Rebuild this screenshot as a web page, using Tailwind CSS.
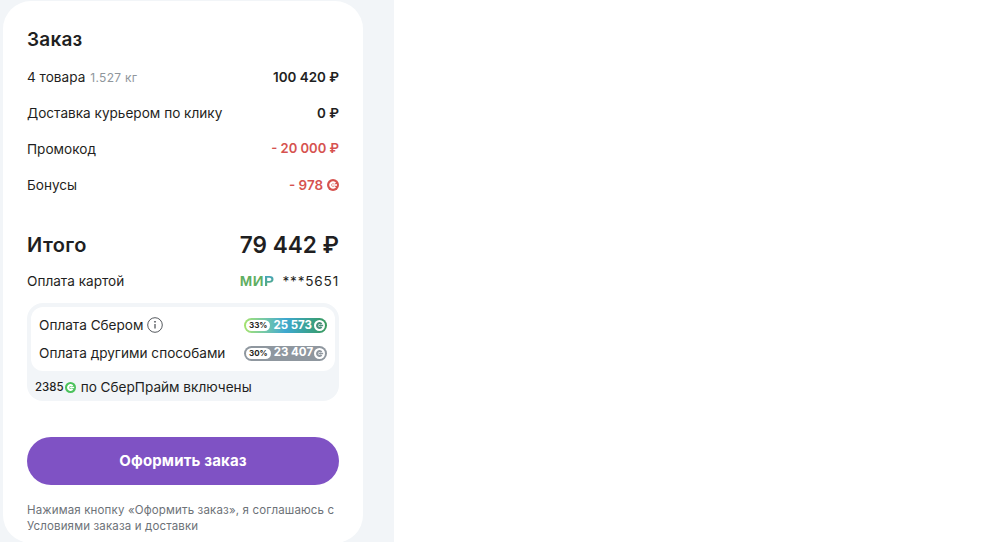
<!DOCTYPE html>
<html lang="ru">
<head>
  <meta charset="utf-8" />
  <title>Заказ</title>
  <script src="https://cdn.jsdelivr.net/npm/@tailwindcss/browser@4"></script>
</head>
<body class="bg-white font-['Inter','Noto_Sans',sans-serif] text-[#1f1f22] overflow-hidden">
  <div class="w-[394px] h-[542px] bg-[#f2f5f8] pl-[3px] pt-px overflow-hidden">
    <section class="w-[360px] h-[542px] bg-white rounded-[28px] px-6 pt-[27px]">
      <h2 class="text-[19px] leading-6 font-semibold tracking-[0.2px] mb-[7px]">Заказ</h2>

      <div class="flex justify-between items-center h-9 text-[13.6px]">
        <div class="flex items-baseline gap-[5px]"><span>4 товара</span><span class="text-[12px] tracking-[0.3px] text-[#8f969c]">1.527 кг</span></div>
        <span class="font-semibold text-[13.4px]">100 420 ₽</span>
      </div>
      <div class="flex justify-between items-center h-9 text-[13.6px]">
        <span>Доставка курьером по клику</span>
        <span class="font-semibold text-[13.4px]">0 ₽</span>
      </div>
      <div class="flex justify-between items-center h-9 text-[13.6px]">
        <span>Промокод</span>
        <span class="font-semibold text-[13px] text-[#d6524f]">- 20 000 ₽</span>
      </div>
      <div class="flex justify-between items-center h-9 text-[13.6px]">
        <span>Бонусы</span>
        <span class="flex items-center gap-[4px] font-semibold text-[13.4px] text-[#d6524f]">- 978
          <svg class="w-3 h-3" viewBox="0 0 12 12"><circle cx="6" cy="6" r="6" fill="#d6524f"/><path d="M8.2 4.4A2.7 2.7 0 1 0 8.2 7.6" fill="none" stroke="#fff" stroke-width="2.2"/><path d="M5 6H10" stroke="#fff" stroke-width="1.6"/></svg>
        </span>
      </div>

      <div class="flex justify-between items-center h-9 mt-[24px]">
        <span class="text-[20px] font-semibold tracking-[0.4px]">Итого</span>
        <span class="text-[22.6px] font-semibold">79 442 ₽</span>
      </div>
      <div class="flex justify-between items-center h-9 text-[13.6px]">
        <span>Оплата картой</span>
        <span class="flex items-center gap-[8px]">
          <span class="font-['Liberation_Sans'] font-bold text-[15px] leading-none tracking-[0.5px] text-[#5fae62]">МИ<span class="text-transparent bg-clip-text bg-gradient-to-b from-[#3f9fd0] to-[#5fae62]">Р</span></span>
          <span class="tracking-[0.8px]">***5651</span>
        </span>
      </div>

      <div class="mt-[4px] bg-[#f2f5f8] rounded-[16px] p-1 pb-0 h-[98px]">
        <div class="bg-white rounded-[12px] h-16 px-2">
          <div class="flex justify-between items-center h-[36px] text-[13.6px] pt-[1px]">
            <span class="flex items-center gap-1">Оплата Сбером
              <svg class="w-4 h-4" viewBox="0 0 16 16" fill="none" stroke="#55595e"><circle cx="8" cy="8" r="7.3"/><path d="M8 7v4.5" stroke-width="1.3"/><circle cx="8" cy="4.8" r=".5" fill="#55595e"/></svg>
            </span>
            <span class="flex items-center w-[83px] h-[15px] rounded-[8px] px-[2px] bg-gradient-to-r from-[#a6e36b] via-[#3fa8d0] to-[#3a9a5c] text-white text-[11.5px] font-bold whitespace-nowrap">
              <span class="bg-white text-[#1f1f22] rounded-full text-[8px] leading-[11px] px-[3px] mr-[3px]">33%</span>25 573
              <svg class="w-[11px] h-[11px] ml-auto" viewBox="0 0 12 12"><circle cx="6" cy="6" r="6" fill="#fff"/><path d="M8.2 4.4A2.7 2.7 0 1 0 8.2 7.6" fill="none" stroke="#4b8f7a" stroke-width="2.2"/><path d="M5 6H10" stroke="#4b8f7a" stroke-width="1.6"/></svg>
            </span>
          </div>
          <div class="flex justify-between items-center h-[20px] text-[13.6px]">
            <span>Оплата другими способами</span>
            <span class="flex items-center w-[83px] h-[15px] rounded-[8px] px-[2px] bg-[#8f979f] text-white text-[11.5px] font-bold whitespace-nowrap">
              <span class="bg-white text-[#1f1f22] rounded-full text-[8px] leading-[11px] px-[3px] mr-[3px]">30%</span>23 407
              <svg class="w-[11px] h-[11px] ml-auto" viewBox="0 0 12 12"><circle cx="6" cy="6" r="6" fill="#fff"/><path d="M8.2 4.4A2.7 2.7 0 1 0 8.2 7.6" fill="none" stroke="#8f979f" stroke-width="2.2"/><path d="M5 6H10" stroke="#8f979f" stroke-width="1.6"/></svg>
            </span>
          </div>
        </div>
        <div class="flex items-center h-[32px] text-[13.6px] pl-1">
          <span class="text-[11.5px] font-medium mt-[2px]">2385</span>
          <svg class="w-[11px] h-[11px] ml-px mr-[5px]" viewBox="0 0 12 12"><circle cx="6" cy="6" r="6" fill="#4cc25c"/><path d="M8.2 4.4A2.7 2.7 0 1 0 8.2 7.6" fill="none" stroke="#fff" stroke-width="2.2"/><path d="M5 6H10" stroke="#fff" stroke-width="1.6"/></svg>
          <span>по СберПрайм включены</span>
        </div>
      </div>

      <button class="block w-full h-12 mt-[36px] rounded-full bg-[#7f52c4] text-white text-[15px] tracking-[0.15px] font-bold">Оформить заказ</button>
      <p class="mt-[17px] text-[11.5px] leading-4 tracking-[0.15px] text-[#6d7278] whitespace-nowrap">Нажимая кнопку «Оформить заказ», я соглашаюсь с<br />Условиями заказа и доставки</p>
    </section>
  </div>
</body>
</html>
